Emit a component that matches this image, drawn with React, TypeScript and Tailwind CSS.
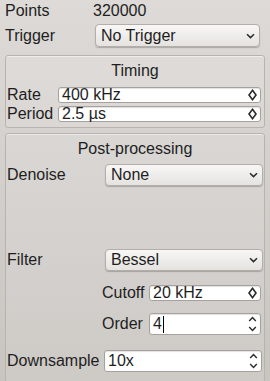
import React from "react";

function Chevron() {
  return (
    <svg width="9" height="6" viewBox="0 0 9 6" className="shrink-0">
      <path d="M1 1.2 L4.5 4.6 L8 1.2" fill="none" stroke="#2b2b2b" strokeWidth="1.5" />
    </svg>
  );
}

function Combo({ value, className }: { value: string; className: string }) {
  return (
    <div
      className={`flex items-center justify-between rounded-[4px] border border-[#b3aea9] bg-gradient-to-b from-[#f8f7f6] to-[#e5e3e0] pl-[5px] pr-[4px] shadow-[0_1px_1px_rgba(0,0,0,0.22)] ${className}`}
    >
      <span className="leading-none">{value}</span>
      <Chevron />
    </div>
  );
}

function Diamond() {
  return (
    <svg width="9" height="12" viewBox="0 0 9 12" className="shrink-0">
      <path d="M4.5 1.3 L8 6 L4.5 10.7 L1 6 Z" fill="none" stroke="#2b2b2b" strokeWidth="1.6" />
    </svg>
  );
}

function UpDown() {
  return (
    <svg width="9" height="16" viewBox="0 0 9 16" className="shrink-0">
      <path d="M1.2 5 L4.5 1.5 L7.8 5" fill="none" stroke="#2b2b2b" strokeWidth="1.4" />
      <path d="M1.2 11 L4.5 14.5 L7.8 11" fill="none" stroke="#2b2b2b" strokeWidth="1.4" />
    </svg>
  );
}

function Spin({
  value,
  arrows,
  className,
  cursor,
}: {
  value: string;
  arrows: "diamond" | "updown";
  className: string;
  cursor?: boolean;
}) {
  return (
    <div
      className={`flex items-center justify-between rounded-[3px] border border-[#a6a19c] bg-white pl-[3px] pr-[3px] shadow-[inset_0_1px_1px_rgba(0,0,0,0.12)] ${className}`}
    >
      <span className="flex items-center leading-none">
        {value}
        {cursor && <span className="ml-[1px] h-[17px] w-px bg-black" />}
      </span>
      {arrows === "diamond" ? <Diamond /> : <UpDown />}
    </div>
  );
}

export default function App() {
  return (
    <div className="h-[381px] w-[270px] overflow-hidden bg-gradient-to-b from-[#dddad7] to-[#c8c4c0] font-['Liberation_Sans',Arial,sans-serif] text-[16px] text-[#1e1e1e]">
      <div className="flex h-[19px] items-center pl-[5px] pt-[2px] leading-none">
        <span className="w-[88px]">Points</span>
        <span>320000</span>
      </div>

      <div className="mt-[5px] flex h-[23px] items-center pl-[5px]">
        <span className="w-[90px] leading-none">Trigger</span>
        <Combo value="No Trigger" className="h-[23px] w-[165px]" />
      </div>

      <div className="mx-[5px] mt-[8px] h-[73px] rounded-[3px] border border-[#b8b3ae] bg-white/10 shadow-[inset_0_1px_0_rgba(255,255,255,0.5)]">
        <div className="flex h-[30px] items-center justify-center leading-none">Timing</div>
        <div className="mt-[1px] flex h-[16px] items-center pl-[1px]">
          <span className="w-[51px] leading-none">Rate</span>
          <Spin value="400 kHz" arrows="diamond" className="h-[16px] w-[203px]" />
        </div>
        <div className="mt-[3px] flex h-[16px] items-center pl-[1px]">
          <span className="w-[51px] leading-none">Period</span>
          <Spin value="2.5 µs" arrows="diamond" className="h-[16px] w-[203px]" />
        </div>
      </div>

      <div className="mx-[5px] mt-[5px] h-[250px] rounded-[3px] border border-[#b8b3ae] bg-white/10 shadow-[inset_0_1px_0_rgba(255,255,255,0.5)]">
        <div className="flex h-[29px] items-center justify-center leading-none">Post-processing</div>
        <div className="mt-[1px] flex h-[22px] items-center pl-[1px]">
          <span className="w-[98px] leading-none">Denoise</span>
          <Combo value="None" className="h-[22px] w-[158px]" />
        </div>

        <div className="mt-[63px] flex h-[22px] items-center pl-[1px]">
          <span className="w-[98px] leading-none">Filter</span>
          <Combo value="Bessel" className="h-[22px] w-[158px]" />
        </div>

        <div className="mt-[14px] flex h-[16px] items-center pl-[96px]">
          <span className="w-[47px] leading-none">Cutoff</span>
          <Spin value="20 kHz" arrows="diamond" className="h-[16px] w-[112px]" />
        </div>

        <div className="mt-[12px] flex h-[22px] items-center pl-[96px]">
          <span className="w-[47px] leading-none">Order</span>
          <Spin value="4" arrows="updown" cursor className="h-[22px] w-[112px]" />
        </div>

        <div className="mt-[15px] flex h-[22px] items-center pl-[1px]">
          <span className="w-[97px] whitespace-nowrap leading-none">Downsample</span>
          <Spin value="10x" arrows="updown" className="h-[22px] w-[158px]" />
        </div>
      </div>
    </div>
  );
}
